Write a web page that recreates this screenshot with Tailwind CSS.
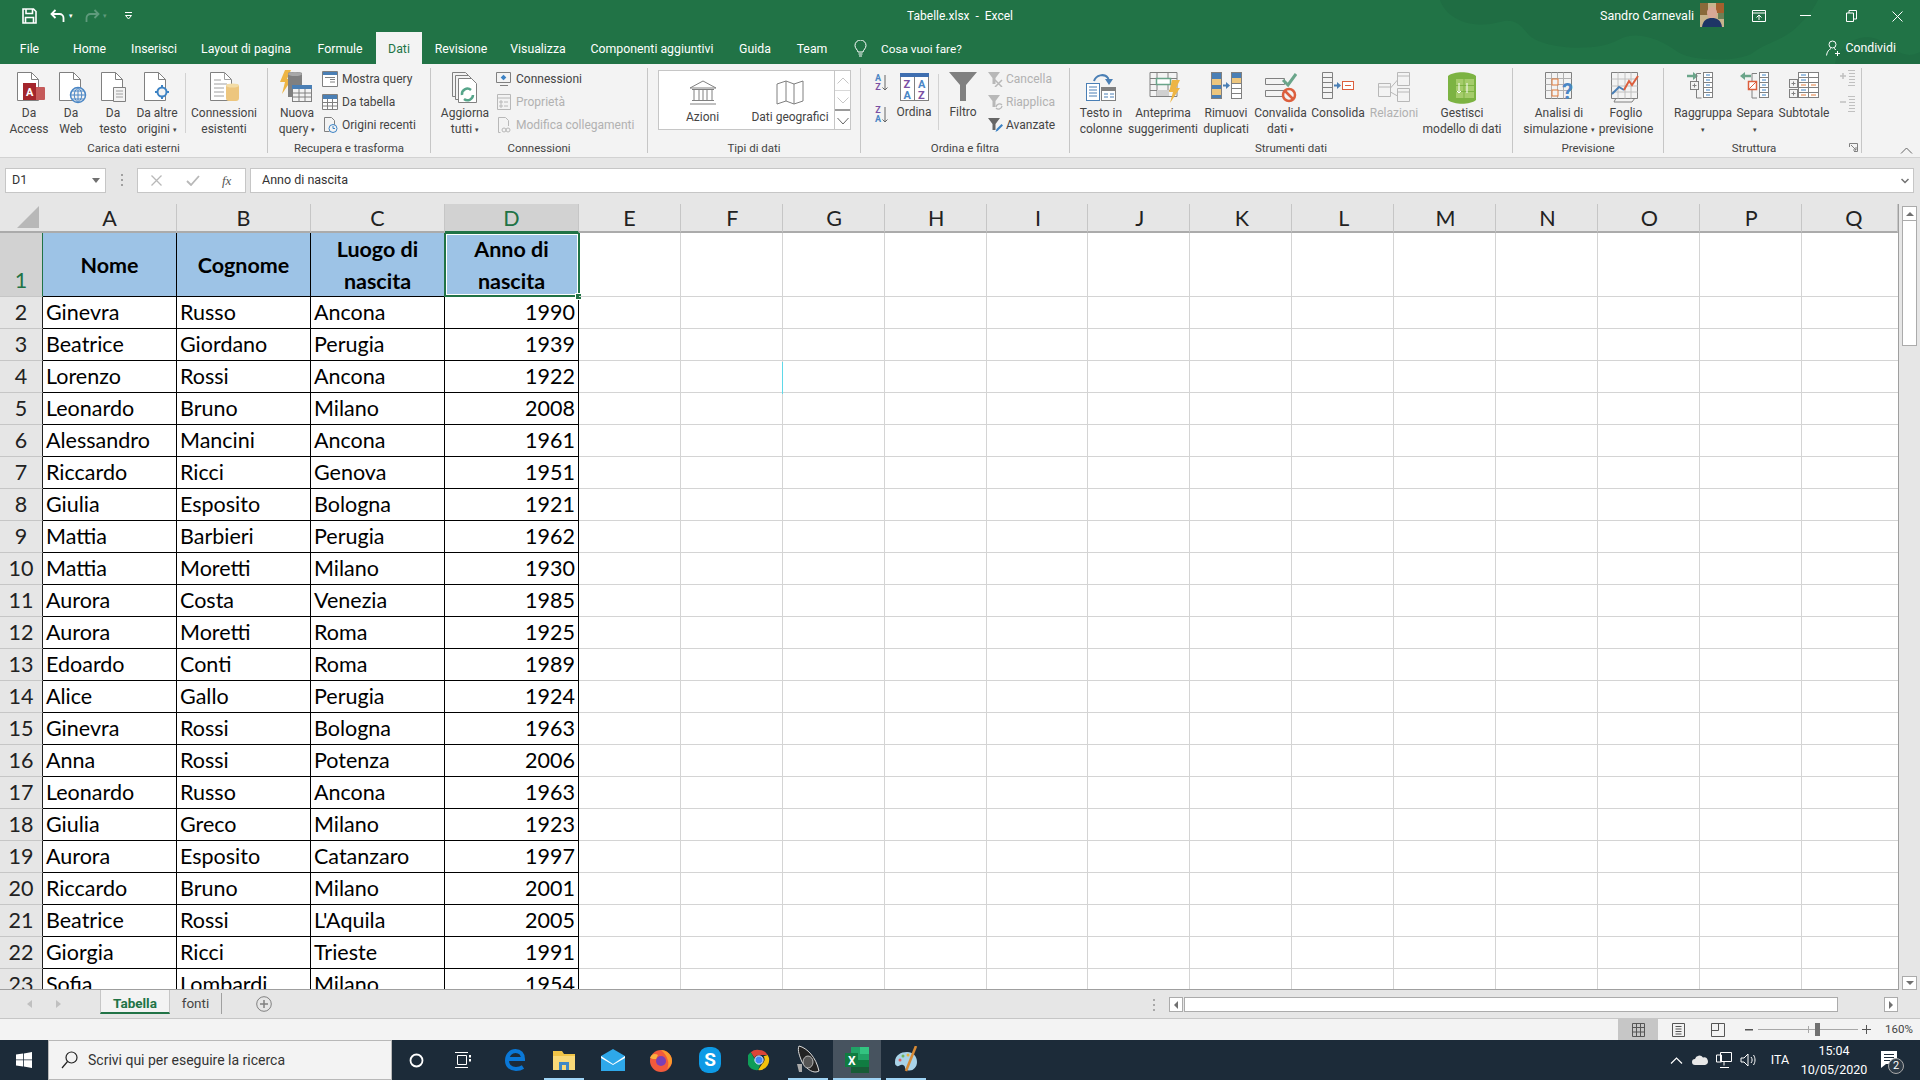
<!DOCTYPE html>
<html lang="it">
<head>
<meta charset="utf-8">
<title>Tabelle.xlsx - Excel</title>
<script src="https://cdn.jsdelivr.net/npm/@tailwindcss/browser@4"></script>
</head>
<body class="m-0">
<div class="w-[1920px] h-[1080px] overflow-hidden flex flex-col font-['Roboto',sans-serif] text-[12px] text-[#444] bg-[#e6e6e6]">

  <!-- green header -->
  <div class="relative h-16 shrink-0 bg-[#217346] text-white">
    <svg class="absolute left-[1430px] top-0" width="490" height="64" viewBox="0 0 490 64" fill="#1f6d43"><path d="M10 0c6 18 30 30 60 22 14-4 20 2 28 12 14 16 70 18 90 6 18-10 40-2 60 12 10 8 60 12 76 0 12-9 30-12 44-26 8-8 14-14 20-26zM405 64c4-22 30-34 48-22 14 8 22 18 37 10v12z"/></svg>
    <div class="relative flex items-center h-8">
      <svg class="ml-[22px] shrink-0" width="15" height="16" viewBox="0 0 15 16" fill="none" stroke="#fff" stroke-width="1.6"><path d="M1 1h10.5L14 3.5V15H1zM4 1v4.5h6.5V1M3.5 15V9.500h8V15"/></svg>
      <svg class="ml-[13px] shrink-0" width="16" height="14" viewBox="0 0 16 14" fill="none" stroke="#fff" stroke-width="1.800"><path d="M5.500 1 1.500 5l4 4M2 5h7.500a4 4 0 0 1 4 4v4"/></svg>
      <span class="ml-[3px] text-[7px]">▾</span>
      <svg class="ml-[11px] shrink-0" width="16" height="14" viewBox="0 0 16 14" fill="none" stroke="#5f9a7c" stroke-width="1.800"><path d="M10.500 1l4 4-4 4M14 5H6.500a4 4 0 0 0-4 4v4"/></svg>
      <span class="ml-[3px] text-[7px] text-[#5f9a7c]">▾</span>
      <svg class="ml-[17px] shrink-0" width="9" height="8" viewBox="0 0 9 8" fill="none" stroke="#fff"><path d="M1 .5h7M1.500 3.500h6L4.500 7z"/></svg>
      <div class="absolute left-[860px] w-[200px] text-center text-[12px]">Tabelle.xlsx&nbsp; -&nbsp; Excel</div>
      <div class="absolute left-[1600px] w-[90px] text-[12.500px] whitespace-nowrap">Sandro Carnevali</div>
      <svg class="absolute left-[1700px] top-[3px]" width="24" height="24" viewBox="0 0 24 24"><rect width="24" height="24" fill="#c8b48c"/><rect x="0" y="0" width="8" height="12" fill="#8a6a3a"/><rect x="16" y="0" width="8" height="10" fill="#a5602e"/><rect x="18" y="10" width="6" height="6" fill="#6e7f55"/><ellipse cx="12" cy="10" rx="5" ry="6.500" fill="#d8a896"/><path d="M2 24c1-7 5-9 10-9s9 2 10 9z" fill="#1e3566"/></svg>
      <svg class="absolute left-[1752px] top-[10px]" width="14" height="12" viewBox="0 0 14 12" fill="none" stroke="#fff"><path d="M.500.500h13v11H.500zM.500 3h13M7 10V5M4.500 7.500 7 5l2.500 2.500"/></svg>
      <svg class="absolute left-[1800px] top-[15px]" width="11" height="2" viewBox="0 0 11 2"><rect width="11" height="1" fill="#fff"/></svg>
      <svg class="absolute left-[1846px] top-[10px]" width="11" height="12" viewBox="0 0 11 12" fill="none" stroke="#fff"><path d="M.500 3h7v8.500h-7zM3 3V.500h7.500V9H8"/></svg>
      <svg class="absolute left-[1892px] top-[11px]" width="11" height="11" viewBox="0 0 11 11" stroke="#fff"><path d="M.500.500l10 10M10.500.500l-10 10"/></svg>
    </div>
    <div class="relative flex h-8 text-[12.300px] text-center leading-[34px]">
      <div class="w-[59px]">File</div>
      <div class="w-[61px]">Home</div>
      <div class="w-[68px]">Inserisci</div>
      <div class="w-[116px]">Layout di pagina</div>
      <div class="w-[72px]">Formule</div>
      <div class="w-[46px] bg-[#f3f3f3] text-[#217346]">Dati</div>
      <div class="w-[78px]">Revisione</div>
      <div class="w-[76px]">Visualizza</div>
      <div class="w-[152px]">Componenti aggiuntivi</div>
      <div class="w-[54px]">Guida</div>
      <div class="w-[60px]">Team</div>
      <svg class="ml-[12px] mt-[8px]" width="13" height="17" viewBox="0 0 13 17" fill="none" stroke="#fff"><path d="M4 12C3.500 9.500 1 8.500 1 5.500a5.500 5.500 0 0 1 11 0C12 8.500 9.500 9.500 9 12zM4.500 14h4M5 16h3"/></svg>
      <div class="ml-[14px] whitespace-nowrap text-[11.800px]">Cosa vuoi fare?</div>
      <div class="absolute right-0 top-0 flex items-center h-8 pr-[24px]">
        <svg width="14" height="16" viewBox="0 0 14 16" fill="none" stroke="#fff"><circle cx="6.500" cy="4.500" r="3.500"/><path d="M.500 15.500c.5-4 2.500-6 4.500-7M8 8.500c1 .4 1.500.8 2 1.500M9 13.500h5M11.500 11v5"/></svg>
        <span class="ml-[5px]">Condividi</span>
      </div>
    </div>
  </div>

  <!-- ribbon -->
  <div class="relative h-[94px] shrink-0 flex bg-[#f3f3f3] border-b border-[#d2d2d2] leading-[16px]">

    <!-- Carica dati esterni -->
    <div class="w-[268px] shrink-0 flex flex-col border-r border-[#c6c6c6] my-[4px]">
      <div class="h-[72px] shrink-0 flex pl-[8px] -mt-[4px]">
        <div class="w-[42px] flex flex-col items-center">
          <svg class="shrink-0 mt-[8px] mb-[1px]" width="34" height="32" viewBox="0 0 34 32"><path d="M5.500.500h14l7 7v21h-21z" fill="#fff" stroke="#808080"/><path d="M19.500.500v7h7" fill="none" stroke="#808080"/><rect x="14" y="15" width="19" height="13" rx="1" fill="#c55a5a"/><rect x="11" y="11" width="13" height="17" fill="#a4262c"/><text x="14" y="24" font-family="Roboto" font-size="11" font-weight="700" fill="#fff">A</text></svg>
          <div class="text-center whitespace-nowrap">Da<br>Access</div>
        </div>
        <div class="w-[42px] flex flex-col items-center">
          <svg class="shrink-0 mt-[8px] mb-[1px]" width="34" height="32" viewBox="0 0 34 32"><path d="M5.500.500h14l7 7v21h-21z" fill="#fff" stroke="#808080"/><path d="M19.500.500v7h7" fill="none" stroke="#808080"/><circle cx="24" cy="23" r="7.500" fill="#f3f3f3" stroke="#4a86c5" stroke-width="1.500"/><path d="M16.500 23h15M24 15.500v15M18 19h12M18 27h12M24 15.500c-5 4-5 11 0 15M24 15.500c5 4 5 11 0 15" fill="none" stroke="#4a86c5"/></svg>
          <div class="text-center whitespace-nowrap">Da<br>Web</div>
        </div>
        <div class="w-[42px] flex flex-col items-center">
          <svg class="shrink-0 mt-[8px] mb-[1px]" width="34" height="32" viewBox="0 0 34 32"><path d="M5.500.500h14l7 7v21h-21z" fill="#fff" stroke="#808080"/><path d="M19.500.500v7h7" fill="none" stroke="#808080"/><path d="M17.500 15.500h12v14h-12z" fill="#f3f3f3" stroke="#808080"/><path d="M20 19h7M20 22h7M20 25h7" stroke="#a0a0a0"/></svg>
          <div class="text-center whitespace-nowrap">Da<br>testo</div>
        </div>
        <div class="w-[46px] flex flex-col items-center">
          <svg class="shrink-0 mt-[8px] mb-[1px]" width="34" height="32" viewBox="0 0 34 32"><path d="M4.500.500h14l7 7v21h-21z" fill="#fff" stroke="#808080"/><path d="M18.500.500v7h7" fill="none" stroke="#808080"/><circle cx="22" cy="20" r="4.500" fill="#f3f3f3" stroke="#3c82c4" stroke-width="2"/><path d="M22 13v3M22 24v3M15 20h3M26 20h3" stroke="#3c82c4" stroke-width="2"/></svg>
          <div class="text-center whitespace-nowrap">Da altre<br>origini <span class="text-[7px] align-middle">▾</span></div>
        </div>
        <div class="w-px h-[60px] ml-[5px] mt-[9px] bg-[#d2d2d2]"></div>
        <div class="w-[76px] flex flex-col items-center">
          <svg class="shrink-0 mt-[8px] mb-[1px]" width="34" height="32" viewBox="0 0 34 32"><path d="M3.500.500h14l7 7v21h-21z" fill="#fff" stroke="#808080"/><path d="M17.500.500v7h7M7 8h7M7 12h13M7 16h10M7 20h10M7 24h10" fill="none" stroke="#a0a0a0"/><rect x="19" y="12" width="13" height="17" rx="3" fill="#edc67e"/><ellipse cx="25.500" cy="13.500" rx="6.500" ry="2" fill="#f3dca6"/></svg>
          <div class="text-center whitespace-nowrap">Connessioni<br>esistenti</div>
        </div>
      </div>
      <div class="text-center text-[11.500px] mt-[4px]">Carica dati esterni</div>
    </div>

    <!-- Recupera e trasforma -->
    <div class="w-[163px] shrink-0 flex flex-col border-r border-[#c6c6c6] my-[4px]">
      <div class="h-[72px] shrink-0 flex -mt-[4px]">
        <div class="w-[50px] ml-[4px] flex flex-col items-center">
          <svg class="shrink-0 mt-[6px] mb-[1px]" width="36" height="34" viewBox="0 0 36 34"><path d="M6 0h6L8 9h5L3 24l3-12H1z" fill="#eeb544"/><path d="M9 3c0-1.500 14-1.500 14 0v24H9z" fill="#808080"/><ellipse cx="16" cy="4" rx="7" ry="2" fill="#a8a8a8"/><rect x="13.500" y="15.500" width="19" height="16" fill="#f3f3f3" stroke="#808080"/><rect x="13" y="15" width="20" height="4" fill="#4a7fb5"/><path d="M20 19v12M26 19v12M13.500 23h19M13.500 27h19" stroke="#808080"/></svg>
          <div class="text-center whitespace-nowrap">Nuova<br>query <span class="text-[7px] align-middle">▾</span></div>
        </div>
        <div class="flex flex-col pt-[4px]">
          <div class="h-[23px] flex items-center gap-[4px] whitespace-nowrap"><svg width="16" height="16" viewBox="0 0 16 16" fill="#fff" stroke="#808080"><path d="M.500.500h15v15H.500z"/><rect x="1" y="1" width="14" height="3" fill="#4a7fb5" stroke="none"/><path d="M8 8.500h5M8 11h5M3 6.500h10" fill="none"/></svg>Mostra query</div>
          <div class="h-[23px] flex items-center gap-[4px] whitespace-nowrap"><svg width="16" height="16" viewBox="0 0 16 16" fill="#fff" stroke="#808080"><path d="M.500.500h15v15H.500z"/><rect x="1" y="1" width="14" height="4" fill="#4a7fb5" stroke="none"/><path d="M5.500 5v10M10.500 5v10M1 8.500h14M1 12h14" fill="none"/></svg>Da tabella</div>
          <div class="h-[23px] flex items-center gap-[4px] whitespace-nowrap"><svg width="16" height="16" viewBox="0 0 16 16" fill="none" stroke="#808080"><path d="M2.500.500h7l3 3V8M2.500.500v14h5"/><circle cx="11" cy="11.500" r="4" fill="#f3f3f3" stroke="#3c82c4"/><path d="M11 9v2.500h2" stroke="#3c82c4"/></svg>Origini recenti</div>
        </div>
      </div>
      <div class="text-center text-[11.500px] mt-[4px]">Recupera e trasforma</div>
    </div>

    <!-- Connessioni -->
    <div class="w-[217px] shrink-0 flex flex-col border-r border-[#c6c6c6] my-[4px]">
      <div class="h-[72px] shrink-0 flex -mt-[4px]">
        <div class="w-[60px] ml-[4px] flex flex-col items-center">
          <svg class="shrink-0 mt-[8px] mb-[1px]" width="34" height="32" viewBox="0 0 34 32" fill="#f3f3f3" stroke="#808080"><path d="M4.500.500h13l5 5v19h-18z"/><path d="M7.500 3.500h13l5 5v19h-18z"/><path d="M10.500 6.500h13l5 5v19h-18z" fill="#fff"/><path d="M14 23a5.500 5.500 0 0 1 9-5M25 23a5.500 5.500 0 0 1-9 4" fill="none" stroke="#56a58a" stroke-width="2.500"/></svg>
          <div class="text-center whitespace-nowrap">Aggiorna<br>tutti <span class="text-[7px] align-middle">▾</span></div>
        </div>
        <div class="flex flex-col pt-[4px] ml-[1px]">
          <div class="h-[23px] flex items-center gap-[4px] whitespace-nowrap"><svg width="16" height="16" viewBox="0 0 16 16" fill="none" stroke="#808080"><path d="M.500 1.500h14v10H.500zM4 14.500h8"/><rect x="5.500" y="4.500" width="4" height="4" fill="#3c82c4" stroke="none" transform="rotate(45 7.500 6.500)"/></svg>Connessioni</div>
          <div class="h-[23px] flex items-center gap-[4px] whitespace-nowrap text-[#b1b1b1]"><svg width="16" height="16" viewBox="0 0 16 16" fill="none" stroke="#b8b8b8"><path d="M1.500.500h13v15h-13zM1.500 4h13M4 7h2v2H4zM4 11h2v2H4zM8 8h4M8 12h4"/></svg>Proprietà</div>
          <div class="h-[23px] flex items-center gap-[4px] whitespace-nowrap text-[#b1b1b1]"><svg width="16" height="16" viewBox="0 0 16 16" fill="none" stroke="#b8b8b8"><path d="M2.500.500h7l3 3V9M2.500.500v15h2"/><circle cx="8" cy="13" r="2"/><circle cx="12" cy="13" r="2"/></svg>Modifica collegamenti</div>
        </div>
      </div>
      <div class="text-center text-[11.500px] mt-[4px]">Connessioni</div>
    </div>

    <!-- Tipi di dati -->
    <div class="w-[213px] shrink-0 flex flex-col border-r border-[#c6c6c6] my-[4px]">
      <div class="h-[72px] shrink-0 -mt-[4px] pl-[10px] pt-[6px]">
        <div class="w-[193px] h-[60px] flex bg-white border border-[#c6c6c6]">
          <div class="w-[87px] flex flex-col items-center">
            <svg class="mt-[9px] mb-[4px]" width="28" height="25" viewBox="0 0 28 25" fill="none" stroke="#808080"><path d="M1 8 14 1l13 7zM3 9.500h22M5 10v10M10 10v10M14 10v10M18 10v10M23 10v10M3 20.500h22M1 24h26"/></svg>
            <div>Azioni</div>
          </div>
          <div class="w-[88px] flex flex-col items-center">
            <svg class="mt-[9px] mb-[4px]" width="28" height="25" viewBox="0 0 28 25" fill="none" stroke="#808080" stroke-linejoin="round"><path d="M1 4l9-3 8 3 9-3v20l-9 3-8-3-9 3zM10 1v20M18 4v20"/></svg>
            <div class="whitespace-nowrap">Dati geografici</div>
          </div>
          <div class="w-[16px] flex flex-col border-l border-[#c6c6c6]">
            <div class="h-[20px] border-b border-[#d8d8d8] flex items-center justify-center"><svg width="12" height="7" viewBox="0 0 12 7" fill="none" stroke="#c6c6c6"><path d="M.500 6.500 6 1l5.500 5.500"/></svg></div>
            <div class="h-[20px] border-b-2 border-[#9a9a9a] flex items-center justify-center"><svg width="12" height="7" viewBox="0 0 12 7" fill="none" stroke="#c6c6c6"><path d="M.500.500 6 6 11.500.500"/></svg></div>
            <div class="flex-1 flex flex-col items-center justify-center"><svg width="12" height="9" viewBox="0 0 12 9" fill="none" stroke="#666"><path d="M.500 2 6 8 11.500 2"/></svg></div>
          </div>
        </div>
      </div>
      <div class="text-center text-[11.500px] mt-[4px]">Tipi di dati</div>
    </div>

    <!-- Ordina e filtra -->
    <div class="w-[209px] shrink-0 flex flex-col border-r border-[#c6c6c6] my-[4px]">
      <div class="h-[72px] shrink-0 flex -mt-[4px]">
        <div class="w-[18px] ml-[14px] flex flex-col pt-[10px] gap-[14px] font-['Roboto'] text-[9px] leading-[9px]">
          <div class="flex items-center"><div class="text-center font-bold"><span class="text-[#4a86c5]">A</span><br><span class="text-[#7a4fa3]">Z</span></div><svg class="ml-[1px]" width="6" height="16" viewBox="0 0 6 16" fill="none" stroke="#666"><path d="M3 0v15M.500 12.500 3 15l2.500-2.500"/></svg></div>
          <div class="flex items-center"><div class="text-center font-bold"><span class="text-[#7a4fa3]">Z</span><br><span class="text-[#4a86c5]">A</span></div><svg class="ml-[1px]" width="6" height="16" viewBox="0 0 6 16" fill="none" stroke="#666"><path d="M3 0v15M.500 12.500 3 15l2.500-2.500"/></svg></div>
        </div>
        <div class="w-[42px] flex flex-col items-center">
          <svg class="shrink-0 mt-[9px] mb-[4px]" width="29" height="28" viewBox="0 0 29 28"><rect x=".5" y=".5" width="28" height="27" fill="#fff" stroke="#808080"/><rect width="29" height="4" fill="#3f6fb0"/><path d="M14.500 4v24" stroke="#808080"/><text x="3.500" y="15" font-family="Roboto" font-size="11" font-weight="700" fill="#7a4fa3">Z</text><text x="3.500" y="26" font-family="Roboto" font-size="11" font-weight="700" fill="#4a86c5">A</text><text x="18" y="15" font-family="Roboto" font-size="11" font-weight="700" fill="#4a86c5">A</text><text x="18" y="26" font-family="Roboto" font-size="11" font-weight="700" fill="#7a4fa3">Z</text></svg>
          <div class="-mt-[1px]">Ordina</div>
        </div>
        <div class="w-px h-[56px] ml-[3px] mt-[10px] bg-[#d2d2d2]"></div>
        <div class="w-[48px] flex flex-col items-center">
          <svg class="shrink-0 mt-[8px] mb-[4px]" width="28" height="29" viewBox="0 0 28 29" fill="#808080"><path d="M0 0h28L17 13v16h-6V13z"/></svg>
          <div class="-mt-[1px]">Filtro</div>
        </div>
        <div class="flex flex-col pt-[4px] ml-[1px]">
          <div class="h-[23px] flex items-center gap-[3px] whitespace-nowrap text-[#b1b1b1]"><svg width="15" height="16" viewBox="0 0 15 16"><path d="M0 1h12L7.500 7v6h-3V7z" fill="#b8b8b8"/><path d="M7 9l7 7M14 9l-7 7" stroke="#b8b8b8" stroke-width="1.500"/></svg>Cancella</div>
          <div class="h-[23px] flex items-center gap-[3px] whitespace-nowrap text-[#b1b1b1]"><svg width="15" height="16" viewBox="0 0 15 16"><path d="M0 1h12L7.500 7v6h-3V7z" fill="#b8b8b8"/><path d="M8 13a3.500 3.500 0 0 1 6-2M14 12a3.500 3.500 0 0 1-6 2" fill="none" stroke="#b8b8b8" stroke-width="1.300"/></svg>Riapplica</div>
          <div class="h-[23px] flex items-center gap-[3px] whitespace-nowrap"><svg width="15" height="16" viewBox="0 0 15 16"><path d="M0 1h12L7.500 7v6h-3V7z" fill="#666"/><path d="M7.500 15l1-3 5-5 1.500 1.500-5 5z" fill="#3c82c4"/></svg>Avanzate</div>
        </div>
      </div>
      <div class="text-center text-[11.500px] mt-[4px]">Ordina e filtra</div>
    </div>

    <!-- Strumenti dati -->
    <div class="w-[443px] shrink-0 flex flex-col border-r border-[#c6c6c6] my-[4px]">
      <div class="h-[72px] shrink-0 flex -mt-[4px]">
        <div class="w-[62px] shrink-0 flex flex-col items-center">
          <svg class="shrink-0 mt-[8px] mb-[1px]" width="32" height="32" viewBox="0 0 32 32" fill="none"><path d="M9 9c2-6 10-8 14-3l1 4" stroke="#4a7fb5" stroke-width="2"/><path d="M20 7h8l-4 6z" fill="#4a7fb5"/><rect x="1.500" y="11.500" width="13" height="17" fill="#fff" stroke="#4a7fb5"/><path d="M4 15h8M4 18h8M4 21h8M4 24h8" stroke="#4a7fb5"/><rect x="16.500" y="15.500" width="14" height="13" fill="#fff" stroke="#808080"/><rect x="16" y="15" width="15" height="4" fill="#808080"/><path d="M19 22h4M25 22h4M19 25h4M25 25h4" stroke="#4a7fb5"/></svg>
          <div class="text-center whitespace-nowrap">Testo in<br>colonne</div>
        </div>
        <div class="w-[62px] shrink-0 flex flex-col items-center">
          <svg class="shrink-0 mt-[8px] mb-[1px] ml-[3px]" width="32" height="32" viewBox="0 0 32 32" fill="none" stroke="#808080"><path d="M1 .500h27v24H1z" fill="#f3f3f3"/><path d="M1 6.500h27M1 12.500h27M1 18.500h27M8 .500v24M19 .500v24"/><rect x="8" y="18" width="12" height="6" fill="#d0d0d0" stroke="none"/><rect x="7.500" y="6.500" width="14" height="6" fill="#fff" stroke="#6aa58a" stroke-width="1.500"/><path d="M23 8h8l-4 8h4L21 31l3-11h-4z" fill="#eeb544" stroke="none"/></svg>
          <div class="text-center whitespace-nowrap">Anteprima<br>suggerimenti</div>
        </div>
        <div class="w-[64px] shrink-0 flex flex-col items-center">
          <svg class="shrink-0 mt-[8px] mb-[1px]" width="32" height="32" viewBox="0 0 32 32"><rect x="1.500" y=".5" width="10" height="26" fill="#4a7fb5" stroke="#808080"/><rect x="2" y="7" width="9" height="6" fill="#edc67e"/><rect x="2" y="17" width="9" height="6" fill="#edc67e"/><rect x="21.500" y=".5" width="10" height="26" fill="#fff" stroke="#808080"/><rect x="22" y="1" width="9" height="5" fill="#4a7fb5"/><rect x="22" y="6" width="9" height="5" fill="#edc67e"/><path d="M21.500 11.500h10M21.500 16.500h10M21.500 21.500h10" stroke="#808080"/><path d="M13 13.500h4" stroke="#4a7fb5" stroke-width="2"/><path d="M16 10l4 3.500-4 3.500z" fill="#4a7fb5"/></svg>
          <div class="text-center whitespace-nowrap">Rimuovi<br>duplicati</div>
        </div>
        <div class="w-[45px] shrink-0 flex flex-col items-center">
          <svg class="shrink-0 mt-[8px] mb-[1px]" width="32" height="32" viewBox="0 0 32 32"><path d="M.5 6.500h19v6H.5zM.5 18.500h19v6H.5z" fill="#f3f3f3" stroke="#808080"/><path d="M18 8l5 5L31 2" fill="none" stroke="#6aa58a" stroke-width="3"/><circle cx="24" cy="23" r="6" fill="#f3f3f3" stroke="#dc5f3e" stroke-width="2.500"/><path d="M20 19l8 8" stroke="#dc5f3e" stroke-width="2.500"/></svg>
          <div class="text-center whitespace-nowrap">Convalida<br>dati <span class="text-[7px] align-middle">▾</span></div>
        </div>
        <div class="w-[70px] shrink-0 flex flex-col items-center">
          <svg class="shrink-0 mt-[8px] mb-[1px]" width="32" height="32" viewBox="0 0 32 32"><path d="M.5.500h10v26H.5zM.5 5.500h10M.5 10.500h10M.5 15.500h10M.5 20.500h10" fill="#f3f3f3" stroke="#808080"/><path d="M12 13.500h4" stroke="#4a7fb5" stroke-width="2"/><path d="M15 10l4 3.500-4 3.500z" fill="#4a7fb5"/><rect x="20.500" y="9.500" width="11" height="8" fill="#fff" stroke="#dc5f3e"/><path d="M23 13.500h6" stroke="#dc5f3e"/></svg>
          <div class="text-center whitespace-nowrap">Consolida</div>
        </div>
        <div class="w-[42px] shrink-0 flex flex-col items-center text-[#b1b1b1]">
          <svg class="shrink-0 mt-[8px] mb-[1px]" width="32" height="32" viewBox="0 0 32 32" fill="none" stroke="#b8b8b8"><path d="M.5 11.500h12v13H.5zM.5 15h12M19.500.500h12v13h-12zM19.500 4h12M19.500 16.500h12v13h-12zM19.500 20h12M12.500 16 19.500 8M12.500 20 19.500 24"/></svg>
          <div class="text-center whitespace-nowrap">Relazioni</div>
        </div>
        <div class="w-[94px] shrink-0 flex flex-col items-center">
          <svg class="shrink-0 mt-[7px] mb-[0px]" width="28" height="34" viewBox="0 0 28 34"><path d="M0 5C6 0 22 0 28 5v24c-6 5-22 5-28 0z" fill="#7cb342"/><path d="M8 8h18v19H8z" fill="#a5cc6b"/><path d="M16 8v19M8 14.500h18M8 20.500h18" stroke="#7cb342"/><path d="M11 12v10M11 22l-2-2M11 22l2-2M19 22V12" stroke="#fff"/></svg>
          <div class="text-center whitespace-nowrap">Gestisci<br>modello di dati</div>
        </div>
      </div>
      <div class="text-center text-[11.500px] mt-[4px]">Strumenti dati</div>
    </div>

    <!-- Previsione -->
    <div class="w-[151px] shrink-0 flex flex-col border-r border-[#c6c6c6] my-[4px]">
      <div class="h-[72px] shrink-0 flex -mt-[4px]">
        <div class="w-[92px] shrink-0 flex flex-col items-center">
          <svg class="shrink-0 mt-[8px] mb-[1px] ml-[3px]" width="32" height="32" viewBox="0 0 32 32"><path d="M.5 .5h26v26H.5z" fill="#f3f3f3" stroke="#808080"/><path d="M.5 6.500h26M.5 12.500h26M.5 18.500h26M6.500.5v26M12.500.5v26M18.500.5v26" stroke="#b0b0b0"/><rect x="7" y="7" width="6" height="6" fill="#f3f3f3" stroke="#e07a3a"/><rect x="7" y="18" width="6" height="6" fill="#f3f3f3" stroke="#e07a3a"/><text x="17" y="27" font-family="Roboto" font-size="22" font-weight="700" fill="#4a86c5">?</text></svg>
          <div class="text-center whitespace-nowrap">Analisi di<br>simulazione <span class="text-[7px] align-middle">▾</span></div>
        </div>
        <div class="w-[42px] shrink-0 flex flex-col items-center">
          <svg class="shrink-0 mt-[8px] mb-[1px]" width="32" height="32" viewBox="0 0 32 32" fill="none"><path d="M1.500 .5h26v26h-26z" fill="#f3f3f3" stroke="#808080"/><path d="M1.500 7h26M1.500 14h26M1.500 20h26M8 .5v26M15 .5v26M21 .5v26" stroke="#c0c0c0"/><path d="M2 22l7-7 5 3" stroke="#4a7fb5" stroke-width="2"/><path d="M14 18l5-9 3 4 6-9" stroke="#dc5f3e" stroke-width="2"/><path d="M6 26l-2 4h18l3-4" stroke="#808080"/></svg>
          <div class="text-center whitespace-nowrap">Foglio<br>previsione</div>
        </div>
      </div>
      <div class="text-center text-[11.500px] mt-[4px]">Previsione</div>
    </div>

    <!-- Struttura -->
    <div class="relative w-[198px] shrink-0 flex flex-col border-r border-[#c6c6c6] my-[4px]">
      <div class="h-[72px] shrink-0 flex -mt-[4px]">
        <div class="w-[78px] shrink-0 flex flex-col items-center">
          <svg class="shrink-0 mt-[8px] mb-[1px]" width="32" height="32" viewBox="0 0 32 32" fill="none"><path d="M0 4h7" stroke="#6aa58a" stroke-width="2.500"/><path d="M6 0l5 4-5 4z" fill="#6aa58a"/><path d="M14 1.500H9.500M9.500 1.500v8M9.500 18v8h5" stroke="#808080"/><rect x="3.500" y="9.500" width="8" height="8" fill="#f3f3f3" stroke="#808080"/><path d="M5.500 13.500h4M7.500 11.500v4" stroke="#808080"/><rect x="16.500" y=".5" width="9" height="25" fill="#fff" stroke="#808080"/><path d="M16.500 5.500h9M16.500 10.500h9M16.500 15.500h9M16.500 20.500h9" stroke="#808080"/><path d="M19 3h4M19 8h4M19 13h4M19 18h4M19 23h4" stroke="#3c82c4"/></svg>
          <div class="text-center whitespace-nowrap">Raggruppa<br><span class="text-[7px] align-middle">▾</span></div>
        </div>
        <div class="w-[26px] shrink-0 flex flex-col items-center">
          <svg class="shrink-0 mt-[8px] mb-[1px]" width="32" height="32" viewBox="0 0 32 32" fill="none"><path d="M5 4h7" stroke="#6aa58a" stroke-width="2.500"/><path d="M6 0L1 4l5 4z" fill="#6aa58a"/><path d="M18 1.500h-5M13 1.500v8M13 18v8h5" stroke="#808080"/><rect x="9.500" y="9.500" width="8" height="8" fill="#fff" stroke="#dc5f3e" stroke-width="1.500"/><path d="M10 17l7-7" stroke="#dc5f3e"/><rect x="20.500" y=".5" width="9" height="25" fill="#fff" stroke="#808080"/><path d="M20.500 5.500h9M20.500 10.500h9M20.500 15.500h9M20.500 20.500h9" stroke="#808080"/><path d="M23 3h4M23 8h4M23 13h4M23 18h4M23 23h4" stroke="#3c82c4"/></svg>
          <div class="text-center whitespace-nowrap">Separa<br><span class="text-[7px] align-middle">▾</span></div>
        </div>
        <div class="w-[72px] shrink-0 flex flex-col items-center">
          <svg class="shrink-0 mt-[8px] mb-[1px]" width="32" height="32" viewBox="0 0 32 32" fill="none"><rect x="10.500" y=".5" width="20" height="25" fill="#fff" stroke="#808080"/><path d="M10.500 5.500h20M10.500 10.500h20M10.500 15.500h20M10.500 20.500h20M20.500 .5v25" stroke="#808080"/><path d="M13 3h5M13 8h5M13 18h5" stroke="#3c82c4"/><path d="M13 13h5M23 13h5M13 23h5M23 23h5" stroke="#e07a3a"/><rect x="1.500" y="7.500" width="8" height="8" fill="#f3f3f3" stroke="#808080"/><rect x="1.500" y="17.500" width="8" height="8" fill="#f3f3f3" stroke="#808080"/><path d="M3.500 11.500h4M5.500 9.500v4M3.500 21.500h4M5.500 19.500v4" stroke="#808080"/></svg>
          <div class="text-center whitespace-nowrap">Subtotale</div>
        </div>
        <div class="w-[20px] shrink-0 flex flex-col gap-[10px] pt-[6px]">
          <svg width="16" height="16" viewBox="0 0 16 16" fill="none" stroke="#c0c0c0"><path d="M0 6h6M3 3v6" stroke-width="1.500"/><path d="M8 .5h7M9 3.500h6M9 6.500h6M9 9.500h6M9 12.500h6M8 15.500h7"/></svg>
          <svg width="16" height="16" viewBox="0 0 16 16" fill="none" stroke="#c0c0c0"><path d="M0 6h6" stroke-width="1.500"/><path d="M8 .5h7M9 3.500h6M9 6.500h6M9 9.500h6M9 12.500h6M8 15.500h7"/></svg>
        </div>
      </div>
      <div class="text-center text-[11.500px] mt-[4px] pr-[17px]">Struttura</div>
      <svg class="absolute right-[3px] bottom-[1px]" width="9" height="9" viewBox="0 0 9 9" fill="none" stroke="#808080"><path d="M.500 4V.500H8.500V8.500H5M2 2l5 5M7 4v3H4"/></svg>
    </div>
    <svg class="absolute right-[7px] bottom-[3px]" width="13" height="7" viewBox="0 0 13 7" fill="none" stroke="#666"><path d="M1 6.500 6.500 1 12 6.500"/></svg>
  </div>

  <!-- formula bar -->
  <div class="h-[46px] shrink-0 flex pt-[10px] pl-[5px] pr-[6px] items-start text-[12.500px] text-[#333]">
    <div class="w-[101px] h-[25px] bg-white border border-[#c6c6c6] flex items-center pl-[6px] justify-between pr-[5px]">D1<svg width="8" height="5" viewBox="0 0 8 5" fill="#707070"><path d="M0 0h8L4 5z"/></svg></div>
    <div class="w-[31px] flex justify-center pt-[6px]"><svg width="2" height="12" viewBox="0 0 2 12" fill="#a0a0a0"><rect y="0" width="2" height="2"/><rect y="5" width="2" height="2"/><rect y="10" width="2" height="2"/></svg></div>
    <div class="w-[109px] h-[25px] bg-white border border-[#c6c6c6] flex items-center">
      <svg class="ml-[13px]" width="11" height="11" viewBox="0 0 11 11" stroke="#b8b8b8" stroke-width="1.300"><path d="M.5.5l10 10M10.500.5l-10 10"/></svg>
      <svg class="ml-[24px]" width="14" height="11" viewBox="0 0 14 11" fill="none" stroke="#b8b8b8" stroke-width="1.800"><path d="M1 6l4 4L13 1"/></svg>
      <span class="ml-[22px] italic font-['Liberation_Serif',serif] text-[#555] text-[13px]">fx</span>
    </div>
    <div class="flex-1 h-[25px] ml-[4px] bg-white border border-[#c6c6c6] flex items-center pl-[11px] justify-between pr-[4px]">Anno di nascita<svg width="8" height="6" viewBox="0 0 8 6" fill="none" stroke="#707070" stroke-width="1.500"><path d="M.5 1 4 4.500 7.500 1"/></svg></div>
  </div>

  <!-- sheet -->
  <div class="h-[786px] shrink-0 flex overflow-hidden font-['Lato',sans-serif] text-[21.500px] text-black">
    <div class="relative w-[1899px] shrink-0 flex flex-col border-r border-b border-[#9f9f9f]">
      <!-- column heads -->
      <div class="h-[29px] shrink-0 flex text-center leading-[29px] text-[#222] *:shrink-0 *:border-r *:border-b-2 *:border-r-[#c6c6c6] *:border-b-[#ababab]">
        <div class="w-[43px] relative !border-r-0"><svg class="absolute right-[4px] bottom-[3px]" width="22" height="22" viewBox="0 0 22 22" fill="#b8b8b8"><path d="M22 0v22H0z"/></svg></div>
        <div class="w-[134px]">A</div>
        <div class="w-[134px]">B</div>
        <div class="w-[134px]">C</div>
        <div class="w-[134px] bg-[#d2d2d2] text-[#217346] !border-b-[#217346]">D</div>
        <div class="w-[101.900px]">E</div><div class="w-[101.900px] pl-[2px]">F</div><div class="w-[101.900px] pl-[2px]">G</div><div class="w-[101.900px] pl-[2px]">H</div><div class="w-[101.900px] pl-[2px]">I</div><div class="w-[101.900px] pl-[2px]">J</div><div class="w-[101.900px] pl-[2px]">K</div><div class="w-[101.900px] pl-[2px]">L</div><div class="w-[101.900px] pl-[2px]">M</div><div class="w-[101.900px] pl-[2px]">N</div><div class="w-[101.900px] pl-[2px]">O</div><div class="w-[101.900px] pl-[2px]">P</div><div class="flex-1 pl-[9px]">Q</div>
      </div>
      <!-- body -->
      <div class="flex-1 flex bg-white overflow-hidden">
        <div class="w-[43px] shrink-0 bg-[#e6e6e6] flex flex-col text-center leading-[31px] text-[#222] *:h-8 *:shrink-0 *:border-b *:border-[#c6c6c6] *:border-r *:border-r-[#222]">
          <div class="!h-16 bg-[#d2d2d2] text-[#217346] !border-r-[#217346] flex items-end justify-center">1</div>
          <div>2</div><div>3</div><div>4</div><div>5</div><div>6</div><div>7</div><div>8</div><div>9</div><div>10</div><div>11</div><div>12</div><div>13</div><div>14</div><div>15</div><div>16</div><div>17</div><div>18</div><div>19</div><div>20</div><div>21</div><div>22</div><div>23</div>
        </div>
        <div class="relative shrink-0 w-[536px]">
          <div class="grid grid-cols-[134px_134px_134px_134px] auto-rows-[32px] [&>*]:border-r [&>*]:border-b [&>*]:border-black [&>*]:pl-[3px] [&>*]:pr-[3px] [&>*]:leading-[31px] [&>*]:whitespace-nowrap [&>*:nth-child(4n)]:text-right">
            <div class="row-span-2 bg-[#9dc3e6] font-bold text-center !leading-[32px] flex items-center justify-center">Nome</div>
            <div class="row-span-2 bg-[#9dc3e6] font-bold text-center !leading-[32px] flex items-center justify-center">Cognome</div>
            <div class="row-span-2 bg-[#9dc3e6] font-bold text-center !leading-[32px]">Luogo di<br>nascita</div>
            <div class="row-span-2 bg-[#9dc3e6] font-bold !text-center !leading-[32px]">Anno di<br>nascita</div>
            <div>Ginevra</div><div>Russo</div><div>Ancona</div><div>1990</div>
            <div>Beatrice</div><div>Giordano</div><div>Perugia</div><div>1939</div>
            <div>Lorenzo</div><div>Rossi</div><div>Ancona</div><div>1922</div>
            <div>Leonardo</div><div>Bruno</div><div>Milano</div><div>2008</div>
            <div>Alessandro</div><div>Mancini</div><div>Ancona</div><div>1961</div>
            <div>Riccardo</div><div>Ricci</div><div>Genova</div><div>1951</div>
            <div>Giulia</div><div>Esposito</div><div>Bologna</div><div>1921</div>
            <div>Mattia</div><div>Barbieri</div><div>Perugia</div><div>1962</div>
            <div>Mattia</div><div>Moretti</div><div>Milano</div><div>1930</div>
            <div>Aurora</div><div>Costa</div><div>Venezia</div><div>1985</div>
            <div>Aurora</div><div>Moretti</div><div>Roma</div><div>1925</div>
            <div>Edoardo</div><div>Conti</div><div>Roma</div><div>1989</div>
            <div>Alice</div><div>Gallo</div><div>Perugia</div><div>1924</div>
            <div>Ginevra</div><div>Rossi</div><div>Bologna</div><div>1963</div>
            <div>Anna</div><div>Rossi</div><div>Potenza</div><div>2006</div>
            <div>Leonardo</div><div>Russo</div><div>Ancona</div><div>1963</div>
            <div>Giulia</div><div>Greco</div><div>Milano</div><div>1923</div>
            <div>Aurora</div><div>Esposito</div><div>Catanzaro</div><div>1997</div>
            <div>Riccardo</div><div>Bruno</div><div>Milano</div><div>2001</div>
            <div>Beatrice</div><div>Rossi</div><div>L'Aquila</div><div>2005</div>
            <div>Giorgia</div><div>Ricci</div><div>Trieste</div><div>1991</div>
            <div>Sofia</div><div>Lombardi</div><div>Milano</div><div>1954</div>
          </div>
          <!-- selected cell D1 -->
          <div class="absolute left-[401px] top-[-1px] w-[136px] h-[65px] border-2 border-[#217346] outline outline-1 -outline-offset-3 outline-white"></div>
          <div class="absolute left-[532px] top-[60px] w-[5px] h-[5px] bg-[#217346] border border-white box-content"></div>
        </div>
        <!-- empty area -->
        <div class="relative flex-1 flex flex-col">
          <div class="h-16 shrink-0 flex border-b border-[#d4d4d4] *:shrink-0 *:w-[101.900px] *:border-r *:border-[#d4d4d4]">
            <div></div><div></div><div></div><div></div><div></div><div></div><div></div><div></div><div></div><div></div><div></div><div></div>
          </div>
          <div class="flex-1 flex bg-[repeating-linear-gradient(to_bottom,transparent_0,transparent_31px,#d4d4d4_31px,#d4d4d4_32px)] *:shrink-0 *:w-[101.900px] *:border-r *:border-[#d4d4d4]">
            <div></div><div></div><div></div><div></div><div></div><div></div><div></div><div></div><div></div><div></div><div></div><div></div>
          </div>
          <div class="absolute left-[203px] top-[129px] w-[1px] h-[32px] bg-[#5fd8e8]"></div>
        </div>
      </div>
    </div>
    <!-- vertical scrollbar -->
    <div class="w-[21px] shrink-0 flex flex-col items-center pt-[2px] bg-[#e6e6e6]">
      <div class="w-[15px] h-[15px] bg-white border border-[#ababab] flex items-center justify-center"><svg width="8" height="4" viewBox="0 0 8 4" fill="#707070"><path d="M4 0l4 4H0z"/></svg></div>
      <div class="w-[15px] h-[125px] bg-white border border-t-0 border-[#ababab]"></div>
      <div class="flex-1"></div>
      <div class="w-[15px] h-[14px] bg-white border border-[#ababab] flex items-center justify-center"><svg width="8" height="4" viewBox="0 0 8 4" fill="#707070"><path d="M4 4l4-4H0z"/></svg></div>
    </div>
  </div>

  <!-- sheet tabs -->
  <div class="h-[29px] shrink-0 flex items-start border-b border-[#c6c6c6] text-[13.500px] bg-[#e6e6e6]">
    <div class="w-[100px] h-[28px] flex items-center pl-[27px] gap-[24px]">
      <svg width="5" height="8" viewBox="0 0 5 8" fill="#c0c0c0"><path d="M5 0v8L0 4z"/></svg>
      <svg width="5" height="8" viewBox="0 0 5 8" fill="#c0c0c0"><path d="M0 0v8l5-4z"/></svg>
    </div>
    <div class="w-[70px] h-[25px] -mt-[1px] bg-[#f3f3f3] border-x border-[#c6c6c6] border-b-2 border-b-[#217346] text-center leading-[28px] font-bold text-[#217346]">Tabella</div>
    <div class="w-[52px] h-[21px] mt-[3px] border-r border-[#a0a0a0] text-center leading-[21px] text-[#444]">fonti</div>
    <svg class="ml-[34px] mt-[6px]" width="16" height="16" viewBox="0 0 16 16" fill="none" stroke="#808080"><circle cx="8" cy="8" r="7.300"/><path d="M8 4v8M4 8h8" stroke-width="1.500"/></svg>
    <svg class="ml-[881px] mt-[9px]" width="2" height="12" viewBox="0 0 2 12" fill="#a8a8a8"><rect width="2" height="2"/><rect y="5" width="2" height="2"/><rect y="10" width="2" height="2"/></svg>
    <div class="ml-[14px] mt-[7px] w-[729px] h-[15px] flex">
      <div class="w-[14px] bg-white border border-[#ababab] flex items-center justify-center"><svg width="4" height="8" viewBox="0 0 4 8" fill="#707070"><path d="M4 0v8L0 4z"/></svg></div>
      <div class="w-[654px] ml-px bg-white border border-[#ababab]"></div>
      <div class="flex-1"></div>
      <div class="w-[14px] bg-white border border-[#ababab] flex items-center justify-center"><svg width="4" height="8" viewBox="0 0 4 8" fill="#707070"><path d="M0 0v8l4-4z"/></svg></div>
    </div>
  </div>

  <!-- status bar -->
  <div class="h-[21px] shrink-0 flex items-center justify-end bg-[#f3f3f3] text-[11.500px] text-[#444]">
    <div class="w-[40px] h-[21px] bg-[#c6c6c6] flex items-center justify-center"><svg width="13" height="14" viewBox="0 0 13 14" fill="none" stroke="#555"><path d="M.5.5h12v13H.5zM4.500.5v13M8.500.5v13M.5 4.500h12M.5 9h12"/></svg></div>
    <div class="w-[40px] flex justify-center"><svg width="13" height="14" viewBox="0 0 13 14" fill="none" stroke="#555"><path d="M.5.5h12v13H.5zM3.500 3.500h6M3.500 6h6M3.500 8.500h6M3.500 11h6"/></svg></div>
    <div class="w-[40px] flex justify-center"><svg width="14" height="14" viewBox="0 0 14 14" fill="none" stroke="#555"><path d="M.5.500h13v13H.5zM7.500.500v7H.5"/></svg></div>
    <svg class="ml-[7px]" width="8" height="2" viewBox="0 0 8 2"><rect width="8" height="1.500" fill="#555"/></svg>
    <div class="relative ml-[5px] w-[100px] h-px bg-[#a8a8a8]">
      <div class="absolute left-[50px] -top-[3px] w-px h-[7px] bg-[#a8a8a8]"></div>
      <div class="absolute left-[57px] -top-[6px] w-[5px] h-[13px] bg-[#707070]"></div>
    </div>
    <svg class="ml-[4px]" width="9" height="9" viewBox="0 0 9 9" fill="#555"><path d="M0 4h9v1H0zM4 0h1v9H4z"/></svg>
    <div class="w-[38px] text-center ml-[9px] mr-[2px]">160%</div>
  </div>

  <!-- taskbar -->
  <div class="relative h-10 shrink-0 flex items-center bg-[#1c2b39] text-white">
    <div class="w-[48px] flex justify-center shrink-0">
      <svg width="16" height="16" viewBox="0 0 16 16" fill="#fff"><path d="M0 2.500 7 1.500V7.500H0zM7.800 1.400 16 0V7.500H7.800zM0 8.300H7V14.500L0 13.500zM7.800 8.300H16V16L7.800 14.600z"/></svg>
    </div>
    <div class="w-[344px] h-10 shrink-0 bg-[#f3f3f3] border border-[#b8b8b8] flex items-center pl-[12px] text-[14px] text-[#333]">
      <svg width="17" height="18" viewBox="0 0 17 18" fill="none" stroke="#222" stroke-width="1.200"><circle cx="10.500" cy="6.500" r="5.500"/><path d="M6.500 10.500 1 17"/></svg>
      <span class="ml-[10px] whitespace-nowrap">Scrivi qui per eseguire la ricerca</span>
    </div>
    <svg class="ml-[17px] shrink-0" width="15" height="15" viewBox="0 0 15 15" fill="none" stroke="#fff" stroke-width="1.800"><circle cx="7.500" cy="7.500" r="6"/></svg>
    <svg class="ml-[31px] shrink-0" width="16" height="16" viewBox="0 0 16 16" fill="none" stroke="#fff"><path d="M2.500 3.500h9v9h-9zM0 .5h13M0 15.500h13"/><rect x="14" y="3" width="2" height="2.500" fill="#fff" stroke="none"/><rect x="14" y="7" width="2" height="2.500" fill="#fff" stroke="none"/></svg>
    <svg class="ml-[34px] shrink-0" width="20" height="22" viewBox="0 0 20 22" fill="none" stroke="#0a78d7" stroke-width="4"><path d="M2 10h16c0-5-3-8-7.500-8S2 6 2 11.500 6 20 11 20c3 0 5.500-1 7-2"/></svg>
    <div class="relative ml-[19px] w-[40px] h-10 flex items-center justify-center shrink-0">
      <svg width="22" height="19" viewBox="0 0 22 19"><path d="M0 0h9l2 3h11v16H0z" fill="#f0c447"/><rect y="5" width="22" height="14" fill="#f9d978"/><rect x="6" y="11" width="10" height="8" fill="#3f88c5"/><rect x="9" y="14" width="4" height="5" fill="#f9d978"/></svg>
      <div class="absolute bottom-0 inset-x-0 h-[2px] bg-[#9fd4f5]"></div>
    </div>
    <svg class="ml-[17px] shrink-0" width="24" height="22" viewBox="0 0 24 22"><path d="M0 7 12 0l12 7v15H0z" fill="#2ea8ea"/><path d="M0 7l12 8 12-8v2L12 16 0 9z" fill="#fff"/></svg>
    <svg class="ml-[24px] shrink-0" width="24" height="24" viewBox="0 0 24 24"><circle cx="12" cy="13" r="11" fill="#f15a3c"/><path d="M12 2c5 0 11 4 11 11 0 3-2 6-5 8 3-5 1-13-6-19z" fill="#fa9a2c"/><circle cx="12" cy="13" r="5" fill="#7b3fb5"/><path d="M1 10c1-4 5-5 8-3l-2 4c-2 0-4 0-6-1z" fill="#fbb040"/></svg>
    <div class="ml-[26px] shrink-0 w-[22px] h-[26px] rounded-[9px] bg-[#0d9ae6] text-center leading-[26px] text-[19px] font-bold font-['Roboto']">S</div>
    <svg class="ml-[27px] shrink-0" width="22" height="24" viewBox="0 0 24 24"><path d="M12 1a11 11 0 0 1 9.500 5.500H12a5.500 5.500 0 0 0-5 3L3 3.500A11 11 0 0 1 12 1z" fill="#db4437"/><path d="M21.500 6.500A11 11 0 0 1 11 23l4.500-7A5.500 5.500 0 0 0 17 8z" fill="#f4c20d"/><path d="M3 3.500l4.500 8a5.500 5.500 0 0 0 6 5L11 23A11 11 0 0 1 3 3.500z" fill="#0f9d58"/><circle cx="12" cy="12" r="4.500" fill="#4285f4" stroke="#fff"/></svg>
    <div class="relative ml-[18px] w-[40px] h-10 flex items-center justify-center shrink-0">
      <svg width="24" height="30" viewBox="0 0 24 30"><path d="M3 1c8 2 17 11 20 25-5 3-12-1-17-9C4 12 1 5 3 1z" fill="#222" stroke="#ddd"/><ellipse cx="12" cy="17" rx="5" ry="6" fill="#555" stroke="#bbb"/><path d="M1 19h5v8H3z" fill="#aaa"/></svg>
      <div class="absolute bottom-0 inset-x-0 h-[2px] bg-[#9fd4f5]"></div>
    </div>
    <div class="relative ml-[5px] w-[48px] h-10 bg-[#47535f] flex items-center justify-center shrink-0">
      <svg width="24" height="26" viewBox="0 0 24 26"><rect x="6" width="18" height="26" fill="#21a366"/><rect x="15" width="9" height="7" fill="#33c481"/><rect x="6" y="13" width="18" height="7" fill="#107c41"/><rect x="6" y="20" width="18" height="6" fill="#185c37"/><rect y="6" width="13" height="14" fill="#107c41"/><text x="3" y="17.500" font-family="Roboto" font-size="12" font-weight="700" fill="#fff">X</text></svg>
      <div class="absolute bottom-0 inset-x-0 h-[2px] bg-[#9fd4f5]"></div>
    </div>
    <div class="relative ml-[5px] w-[40px] h-10 flex items-center justify-center shrink-0">
      <svg width="24" height="28" viewBox="0 0 24 28"><path d="M1 16C1 9 7 6 13 6c6 0 10 4 10 10s-5 10-10 8c-3-1-1-4-4-5s-4 2-6 1-2-2-2-4z" fill="#a9d3e8"/><circle cx="6" cy="14" r="1.500" fill="#e05d5d"/><circle cx="9" cy="10" r="1.500" fill="#6fb85d"/><circle cx="14" cy="9" r="1.500" fill="#e8b13c"/><path d="M22 0 12 25" stroke="#d78a35" stroke-width="2.500"/></svg>
      <div class="absolute bottom-0 inset-x-0 h-[2px] bg-[#9fd4f5]"></div>
    </div>
    <div class="flex-1"></div>
    <svg class="shrink-0" width="13" height="7" viewBox="0 0 13 7" fill="none" stroke="#fff" stroke-width="1.200"><path d="M1 6.500 6.500 1 12 6.500"/></svg>
    <svg class="ml-[9px] shrink-0" width="16" height="10" viewBox="0 0 16 10" fill="#e8e8e8"><path d="M3 10a3 3 0 0 1 0-6 4.500 4.500 0 0 1 8-1.500A3.500 3.500 0 0 1 13 10z"/></svg>
    <svg class="ml-[8px] shrink-0" width="16" height="16" viewBox="0 0 16 16" fill="none" stroke="#fff"><path d="M4.500.5h11v9h-11zM.5 3h5v7h-5zM8 9.500v4M4 15.500h9"/></svg>
    <svg class="ml-[8px] shrink-0" width="16" height="14" viewBox="0 0 16 14" fill="none" stroke="#fff"><path d="M1 5h3l4-4v12l-4-4H1zM11 4c1.500 2 1.500 4 0 6M13.500 2c2 3 2 7 0 10"/></svg>
    <div class="ml-[13px] w-[22px] text-center text-[12.500px] shrink-0">ITA</div>
    <div class="ml-[8px] w-[70px] text-center text-[12.500px] leading-[19px] shrink-0">15:04<br>10/05/2020</div>
    <div class="relative ml-[12px] mr-[23px] shrink-0 w-[16px] h-[18px]">
      <svg width="16" height="18" viewBox="0 0 16 18"><path d="M0 0h16v13H5l-5 4z" fill="#fff"/><path d="M3 3.500h10M3 6.500h10M3 9.500h6" stroke="#1c2b39"/></svg>
      <div class="absolute left-[7px] top-[7px] w-[16px] h-[16px] rounded-full bg-[#2d3a46] border border-[#aaa] text-center text-[11px] leading-[14px]">2</div>
    </div>
  </div>
</div>
</body>
</html>
